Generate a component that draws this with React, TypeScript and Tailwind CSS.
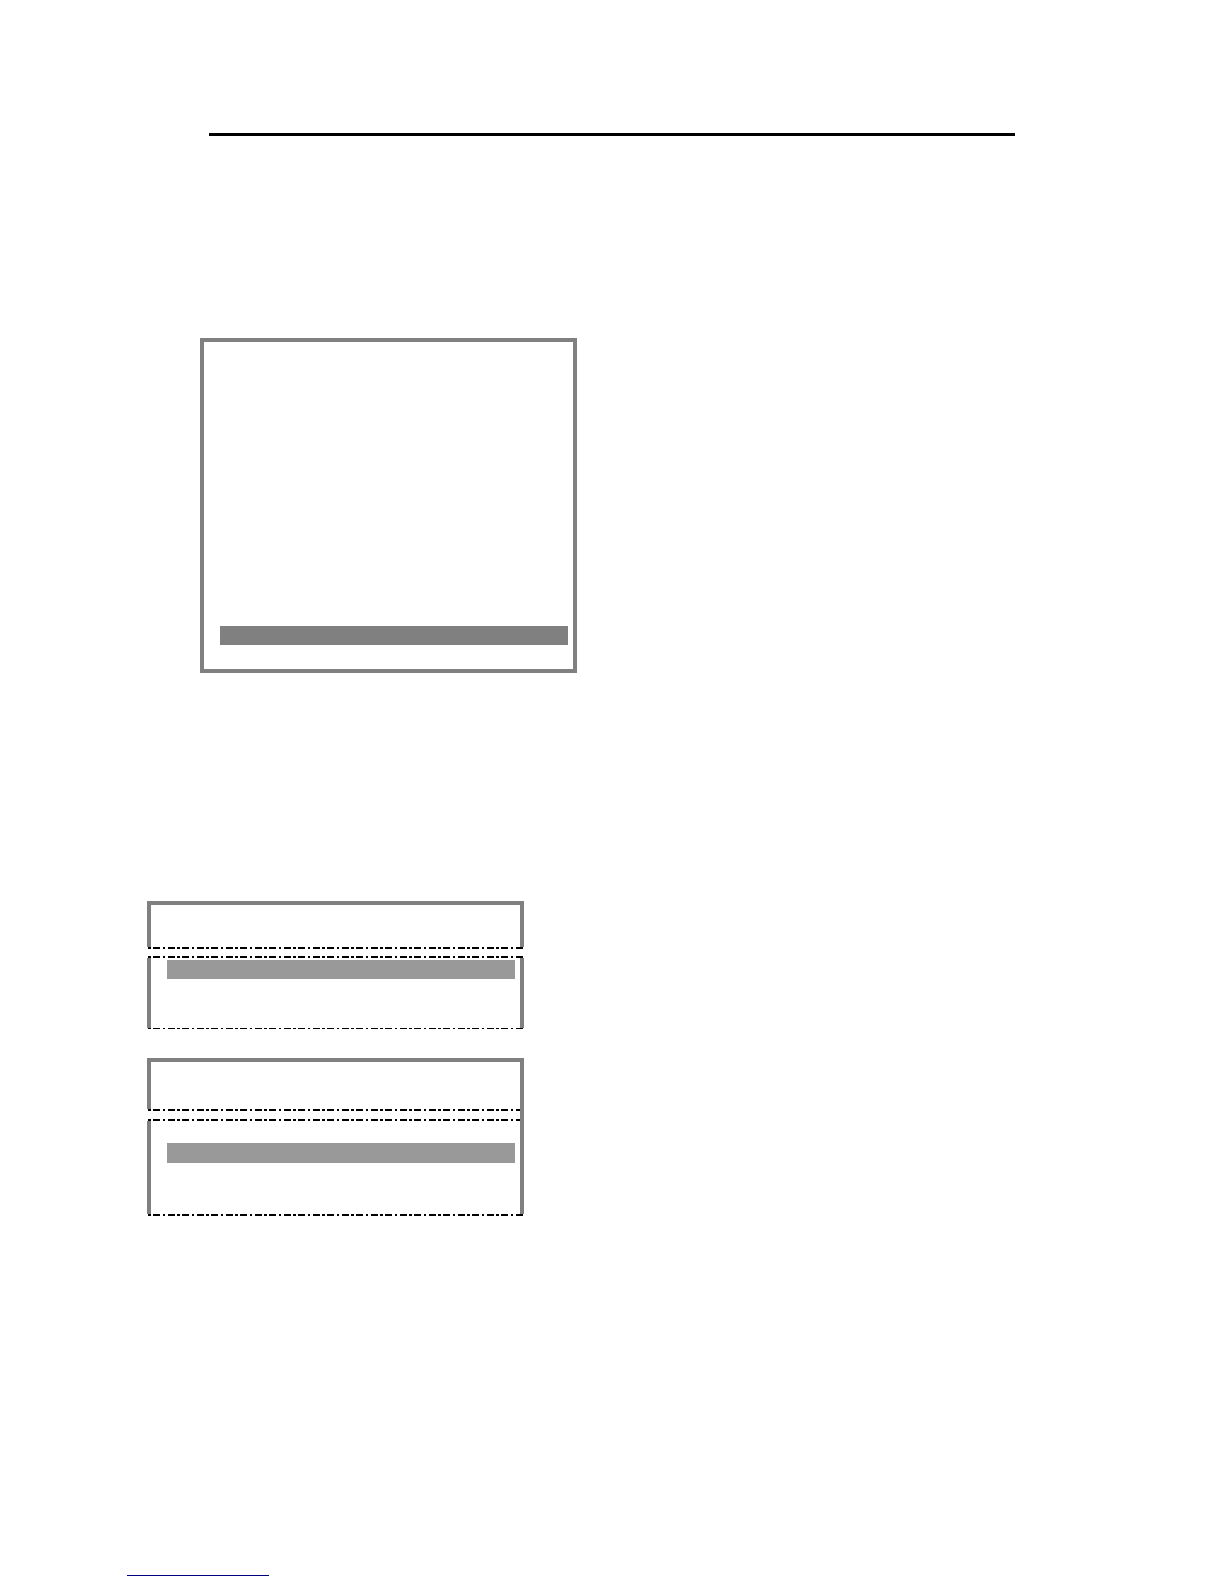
type CutLineProps = {
	overhang?: boolean;
	thin?: boolean;
};

// Dash-dot line marking where a menu is cut off
function CutLine({ overhang = false, thin = false }: CutLineProps) {
	return (
		<svg
			aria-hidden="true"
			className={`block shrink-0 ${thin ? "h-px" : "h-0.5"} ${overhang ? "w-[378px]" : "w-[373px]"}`}
			shapeRendering="crispEdges"
		>
			<line
				x1="1"
				x2="100%"
				y1={thin ? "0.5" : "1"}
				y2={thin ? "0.5" : "1"}
				stroke="#000"
				strokeWidth={thin ? 1 : 2}
				strokeDasharray="2.8 2.2 7 2.5"
			/>
		</svg>
	);
}

export default function App() {
	return (
		<main className="flex flex-col bg-white pt-[133px] pb-2">
			<hr className="mr-[209px] ml-[209px] h-[3px] border-0 bg-black" />

			<section className="mt-[202px] ml-[200px] flex h-[335px] w-[377px] flex-col justify-end border-4 border-[#808080] pr-[5px] pb-6 pl-4">
				<div className="h-[19px] bg-[#808080]" />
			</section>

			<section className="mt-[228px] ml-[147px] w-[377px]">
				<div className="h-[46px] border-4 border-b-0 border-[#808080]" />
				<CutLine overhang />
				<div className="h-[7px]" />
				<CutLine overhang />
				<div className="h-[70px] border-x-4 border-[#808080] pt-0.5 pr-[5px] pl-4">
					<div className="h-[19px] bg-[#999999]" />
				</div>
				<CutLine overhang thin />
			</section>

			<section className="mt-[29px] ml-[147px] w-[377px]">
				<div className="flex h-[156px] flex-col border-t-4 border-r-4 border-[#808080]">
					<div className="h-[47px] border-l-4 border-[#808080]" />
					<CutLine />
					<div className="h-2" />
					<CutLine />
					<div className="flex-1 border-l-4 border-[#808080] pt-[22px] pr-[5px] pl-4">
						<div className="h-5 bg-[#999999]" />
					</div>
				</div>
				<CutLine overhang />
			</section>

			<hr className="mt-[359px] ml-[127px] h-px w-[142px] border-0 bg-[#000080]" />
		</main>
	);
}
